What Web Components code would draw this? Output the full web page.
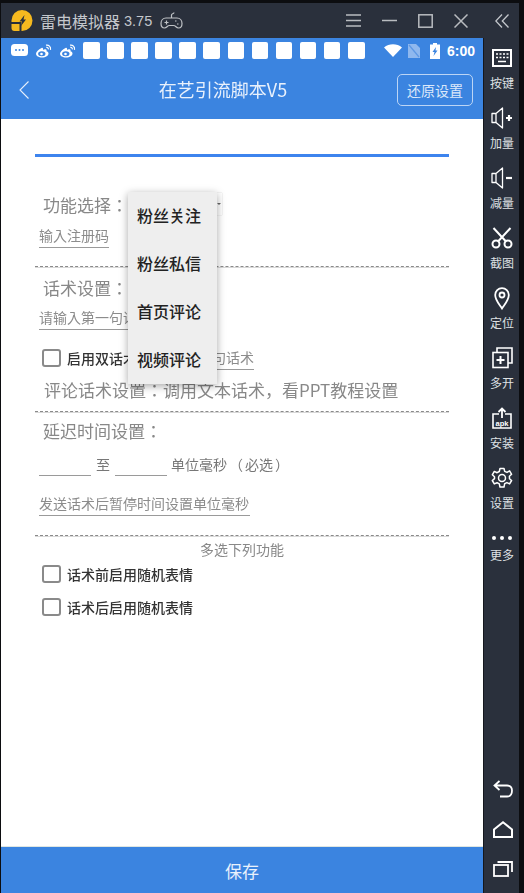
<!DOCTYPE html>
<html lang="zh">
<head>
<meta charset="utf-8">
<title>雷电模拟器</title>
<style>
  html, body { margin: 0; height: 100%; background: #0c0d10; }
  body { font-family: "Noto Sans CJK SC", "Noto Sans", sans-serif; overflow: hidden; }
</style>
</head>
<body>
<emu-window>
  <emu-titlebar slot="title"></emu-titlebar>
  <emu-sidebar slot="side">
    <side-item label="按键"><svg width="20" height="18" viewBox="0 0 20 18" fill="none" stroke="#fff" stroke-width="2"><rect x="1" y="1" width="18" height="16"/><path d="M4 5h2M7.500 5h2M11 5h2M14.500 5h2M4 8.500h2M7.500 8.500h2M11 8.500h2M14.500 8.500h2M6 12.500h8" stroke-width="1.600"/></svg></side-item>
    <side-item label="加量"><svg width="24" height="24" viewBox="0 0 24 24" fill="none" stroke="#fff" stroke-width="1.300"><path d="M2 7.500h4v9H2zM6 7.500L12.500 2v20L6 16.500" stroke-linejoin="round"/><path d="M16 12h6M19 9v6" stroke-width="2.200"/></svg></side-item>
    <side-item label="减量"><svg width="24" height="24" viewBox="0 0 24 24" fill="none" stroke="#fff" stroke-width="1.300"><path d="M2 7.500h4v9H2zM6 7.500L12.500 2v20L6 16.500" stroke-linejoin="round"/><path d="M16 12h6" stroke-width="2.200"/></svg></side-item>
    <side-item label="截图"><svg width="22" height="22" viewBox="0 0 22 22" fill="none" stroke="#fff" stroke-width="2"><circle cx="5" cy="17" r="3.500"/><circle cx="17" cy="17" r="3.500"/><path d="M7 14.500L19.500 1M15 14.500L2.500 1"/></svg></side-item>
    <side-item label="定位"><svg width="16" height="23" viewBox="0 0 16 23" fill="none" stroke="#fff" stroke-width="1.800"><path d="M8 21.500C5 17 1.200 13 1.200 8a6.800 6.800 0 0 1 13.600 0c0 5-3.800 9-6.800 13.500z"/><circle cx="8" cy="8" r="2.500"/></svg></side-item>
    <side-item label="多开"><svg width="21" height="22" viewBox="0 0 21 22" fill="none" stroke="#fff" stroke-width="1.600"><path d="M5 5V1h15v15h-4"/><rect x="1" y="5.500" width="15" height="15"/><path d="M4.500 13h8M8.500 9v8" stroke-width="2"/></svg></side-item>
    <side-item label="安装"><svg width="20" height="22" viewBox="0 0 20 22" fill="none" stroke="#fff" stroke-width="1.600"><path d="M7 7H1v14h18V7h-6"/><path d="M10 11V2M6.500 5L10 1.500 13.500 5" stroke-width="1.800"/><text x="10" y="18.500" text-anchor="middle" fill="#fff" stroke="none" font-family="Liberation Sans, sans-serif" font-size="7.500" font-weight="700">apk</text></svg></side-item>
    <side-item label="设置"><svg width="22" height="22" viewBox="0 0 22 22" fill="none" stroke="#fff" stroke-width="1.500"><path d="M9 1.500h4l.7 2.900 2.300 1 2.600-1.500 2 3.400-2.200 2 .1 2.400 2.100 1.800-2 3.400-2.700-1.300-2.200 1.100-.7 3.300H9l-.7-3.200-2.200-1.100-2.800 1.200-2-3.400 2.200-1.900V9.700L1.300 7.800l2-3.400 2.800 1.300 2.200-1.200z" stroke-linejoin="round"/><circle cx="11" cy="11" r="3.500"/></svg></side-item>
    <side-item label="更多" tight><svg width="22" height="6" viewBox="0 0 22 6" fill="#fff"><circle cx="3" cy="3" r="2"/><circle cx="11" cy="3" r="2"/><circle cx="19" cy="3" r="2"/></svg></side-item>
  </emu-sidebar>
  <phone-status slot="status"></phone-status>
  <app-bar slot="bar" heading="在艺引流脚本V5" action="还原设置"></app-bar>
  <form-panel slot="body" lang="ja">
    <blue-rule></blue-rule>

    <form-label style="margin-top:32px">功能选择：<spin-box></spin-box></form-label>
    <text-field style="margin:5px 0 0 38px;width:70px">输入注册码</text-field>
    <dash-rule style="margin-top:18px"></dash-rule>

    <form-label style="margin-top:4px">话术设置：</form-label>
    <text-field style="margin:4px 0 0 38px;width:112px">请输入第一句话术</text-field>

    <check-row style="margin-top:18px">启用双话术<text-field style="margin-left:5px;width:112px">请输入第二句话术</text-field></check-row>
    <form-label style="margin-top:6px;margin-left:43px">评论话术设置：调用文本话术，看PPT教程设置</form-label>
    <dash-rule style="margin-top:7px"></dash-rule>

    <form-label style="margin-top:2px">延迟时间设置：</form-label>
    <delay-row style="margin-top:6px"></delay-row>
    <text-field style="margin:16px 0 0 38px;width:211px">发送话术后暂停时间设置单位毫秒</text-field>
    <dash-rule style="margin-top:19px"></dash-rule>

    <multi-title style="margin-top:1px">多选下列功能</multi-title>
    <check-row style="margin-top:4px">话术前启用随机表情</check-row>
    <check-row style="margin-top:13px">话术后启用随机表情</check-row>

    <pop-menu slot="over">
      <menu-item>粉丝关注</menu-item>
      <menu-item>粉丝私信</menu-item>
      <menu-item>首页评论</menu-item>
      <menu-item>视频评论</menu-item>
    </pop-menu>
  </form-panel>
  <save-bar slot="save">保存</save-bar>
</emu-window>

<script>
// small helper, every element below just sets html in an open shadow root
class Base extends HTMLElement {
    static html = "";
    constructor() {
        super();
        this.attachShadow({ mode: "open" });
    }
    connectedCallback() {
        this.shadowRoot.innerHTML = this.constructor.html.replace(/\{\{(.+?)\}\}/g, (_, n) => this.getAttribute(n) ?? "");
    }
}

class EmuWindow extends Base {
    static html = `
      <style>
        :host { display: grid; width: 524px; height: 893px; padding-top: 3px; box-sizing: border-box;
          grid-template-columns: 1px 482px 1px 35px 5px; grid-template-rows: 35px 1fr; background: #0c0d10; }
        .title { grid-column: 2 / 5; grid-row: 1; }
        .line { grid-column: 3; grid-row: 2; background: #14171d; }
        .side { grid-column: 4; grid-row: 1 / 3; z-index: 1; }
        .phone { grid-column: 2; grid-row: 2; display: flex; flex-direction: column; background: #fff; min-height: 0; }
      </style>
      <div class="title"><slot name="title"></slot></div>
      <div class="phone">
        <slot name="status"></slot><slot name="bar"></slot><slot name="body"></slot><slot name="save"></slot>
      </div>
      <div class="line"></div>
      <div class="side"><slot name="side"></slot></div>`;
}

class EmuTitlebar extends Base {
    static html = `
      <style>
        :host { display: flex; align-items: center; height: 35px; background: #2a303c; color: #c4c7cc;
          font: 16px "Noto Sans CJK SC", sans-serif; padding-left: 10px; }
        .logo { margin-right: 7px; }
        .ver { font: 14.500px "Liberation Sans", sans-serif; margin-left: 4px; }
        .pad { margin-left: 8px; }
        .ctl { margin-left: auto; display: flex; gap: 21px; margin-right: 51px; align-items: center; }
        .ctl svg { display: block; }
      </style>
      <svg class="logo" width="22" height="21" viewBox="0 0 22 21" fill="#f6b91f"><path d="M.5 12v-1.500a10.500 10.500 0 1 1 10.500 10.500h-.5V12z"/><path d="M.5 14h8v7h-5a3 3 0 0 1-3-3z"/><path d="M13.500 5L8.500 11.500H11L10 16l5-6.500h-2.500z" fill="#2a303c"/></svg>
      <span>雷电模拟器</span><span class="ver">3.75</span>
      <svg class="pad" width="23" height="18" viewBox="0 0 23 18" fill="none" stroke="#bfc2c6" stroke-width="1.200"><path d="M6 6h11c3 0 5 2.500 5 5.500 0 3-1.500 4.500-3.500 4.500-2.500 0-2.500-2.500-5-2.500h-4c-2.500 0-2.500 2.500-5 2.500C2.500 16 1 14.500 1 11.500 1 8.500 3 6 6 6zM11.500 6V3c0-1.500 2.500-1 2.500-2.500"/><path d="M4.500 10.500h4M6.500 8.500v4M15 9h1.500M17 12h1.500"/></svg>
      <div class="ctl">
        <svg width="15" height="13" viewBox="0 0 15 13" fill="none" stroke="#b9bcc0" stroke-width="1.500"><path d="M0 1h15M0 6.500h15M0 12h15"/></svg>
        <svg width="15" height="13" viewBox="0 0 15 13" fill="none" stroke="#b9bcc0" stroke-width="1.500"><path d="M0 6.500h15"/></svg>
        <svg width="15" height="14" viewBox="0 0 15 14" fill="none" stroke="#b9bcc0" stroke-width="1.500"><rect x=".8" y=".8" width="13.400" height="12.400"/></svg>
        <svg width="14" height="14" viewBox="0 0 14 14" fill="none" stroke="#b9bcc0" stroke-width="1.500"><path d="M.5.500l13 13M13.500.500l-13 13"/></svg>
      </div>`;
}

class EmuSidebar extends Base {
    static html = `
      <style>
        :host { display: flex; flex-direction: column; align-items: stretch; height: 890px; background: #2a303c; box-sizing: border-box; }
        .fold { height: 35px; display: flex; align-items: center; justify-content: center; margin-bottom: 3px; }
        .nav { margin-top: auto; display: flex; flex-direction: column; align-items: center; gap: 23px; padding-bottom: 16px; padding-left: 2px; }
        svg { display: block; }
      </style>
      <div class="fold"><svg width="14" height="14" viewBox="0 0 14 14" fill="none" stroke="#c4c7cc" stroke-width="1.300"><path d="M7 .5L.8 7 7 13.500M13.500 .5L7.300 7l6.200 6.500"/></svg></div>
      <slot></slot>
      <div class="nav">
        <svg width="20" height="18" viewBox="0 0 20 18" fill="none" stroke="#fff" stroke-width="1.800"><path d="M6.500 1L1.500 5.500l5 4.500M1.500 5.500H14c3 0 5 1.500 5 5 0 4-2 6-5 6H7"/></svg>
        <svg width="20" height="17" viewBox="0 0 20 17" fill="none" stroke="#fff" stroke-width="2"><path d="M10 1.300L1 8.500V16h18V8.500z"/></svg>
        <svg width="20" height="16" viewBox="0 0 20 16" fill="none" stroke="#fff" stroke-width="1.800"><rect x="1" y="4" width="14" height="11"/><path d="M4.500 1H19v10"/></svg>
      </div>`;
}

class SideItem extends Base {
    static html = `
      <style>
        :host { display: flex; flex-direction: column; align-items: center; height: 60px; padding-left: 1px; color: #dfe1e4;
          font: 12px/16px "Noto Sans CJK SC", sans-serif; }
        .ico { height: 34px; display: flex; align-items: center; justify-content: center; }
        :host([tight]) .txt { margin-top: -8px; }
      </style>
      <div class="ico"><slot></slot></div>
      <div class="txt">{{label}}</div>`;
}

class PhoneStatus extends Base {
    connectedCallback() {
        const squares = Array(12).fill('<i class="sq"></i>').join("");
        const weibo = `<svg width="17" height="14" viewBox="0 0 17 14" fill="none"><path d="M6.500 4C3.500 5.300 1 7.800 1 9.800 1 12 3.800 13.500 7 13.500c3.800 0 6.500-2 6.500-4 0-1.500-1.500-2-2-2.200.3-1.300 0-2-1-2-1 0-2 .5-2.500.5.300-1.500-.2-2.500-1.500-1.800z" fill="#fff"/><ellipse cx="6.800" cy="9.800" rx="3.700" ry="2.500" fill="#3b84e0"/><circle cx="6.500" cy="10" r="1.300" fill="#fff"/><path d="M11 1.200c2.800-.6 5 1.600 4.500 4.600M11.300 3.400c1.300-.3 2.300.7 2 2" stroke="#fff" stroke-width="1.200"/></svg>`;
        this.shadowRoot.innerHTML = `
      <style>
        :host { display: flex; align-items: center; box-sizing: border-box; height: 22px; background: #3b84e0; padding: 3px 8px 0 10px; }
        svg { display: block; flex: none; }
        .sq { width: 16.500px; height: 16.500px; background: #fff; border-radius: 2px; margin-right: 7.600px; flex: none; }
        .w { margin-right: 7px; }
        .right { margin-left: auto; display: flex; align-items: center; }
        .time { font: 700 14px "Liberation Sans", sans-serif; color: #fff; margin-left: 7px; }
      </style>
      <svg class="w" width="17" height="13" viewBox="0 0 17 13"><rect x="0" y="0" width="17" height="12" rx="3.500" fill="#fff"/><circle cx="5" cy="6" r="1" fill="#3b84e0"/><circle cx="8.500" cy="6" r="1" fill="#3b84e0"/><circle cx="12" cy="6" r="1" fill="#3b84e0"/></svg>
      ${weibo.replace("<svg", '<svg class="w"')}
      ${weibo.replace("<svg", '<svg class="w"')}
      ${squares}
      <div class="right">
        <svg width="18" height="13" viewBox="0 0 18 13"><path d="M0 3.500C5 -.8 13 -.8 18 3.500L9 13z" fill="#fff"/></svg>
        <svg style="margin-left:6px" width="12" height="14" viewBox="0 0 12 14"><path d="M0 0h8l4 4v10H0z" fill="#8fb8ee"/><path d="M1 1l10 12" stroke="#5d98e4" stroke-width="1.200"/></svg>
        <svg style="margin-left:10px" width="10" height="16" viewBox="0 0 10 16"><path d="M3 0h4v1.500h3V16H0V1.500h3z" fill="#fff"/><path d="M6 4L2.500 9h2L3.500 13 7.500 7.500h-2z" fill="#3b84e0"/></svg>
        <span class="time">6:00</span>
      </div>`;
    }
}

class AppBar extends Base {
    static html = `
      <style>
        :host { display: block; position: relative; height: 59px; background: #3b84e0; color: #e9f1fc;
          font: 18px/59px "Noto Sans CJK SC", sans-serif; text-align: center; }
        .row { display: flex; align-items: center; height: 59px; padding: 0 10px 0 18px; }
        .back { display: block; }
        h1 { flex: 1; margin: 0; font: inherit; padding-left: 20px; text-align: center; filter: blur(.25px); }
        button { width: 76px; height: 32px; box-sizing: border-box; padding: 0; background: none; color: #dbe8fa;
          border: 1px solid #bcd5f5; border-radius: 5px; font: 14px "Noto Sans CJK SC", sans-serif; }
      </style>
      <div class="row">
        <svg class="back" width="10" height="18" viewBox="0 0 10 18" fill="none" stroke="#e6effb" stroke-width="1.100"><path d="M9.500 .5L1 9l8.500 8.500"/></svg>
        <h1>{{heading}}</h1>
        <button>{{action}}</button>
      </div>`;
}

class FormPanel extends Base {
    static html = `
      <style>
        :host { display: block; position: relative; flex: 1; min-height: 0; background: #fff; padding-top: 35px; box-sizing: border-box;
          border-bottom: 1px solid #dfe6e2; font-family: "Noto Sans CJK JP", sans-serif; }
        .flow { display: flex; flex-direction: column; align-items: flex-start; filter: blur(.3px); }
      </style>
      <div class="flow"><slot></slot></div>
      <slot name="over"></slot>`;
}

class BlueRule extends Base {
    static html = `<style>:host { display: block; width: 414px; height: 3px; margin-left: 34px; background: #3d84ee; }</style>`;
}

class DashRule extends Base {
    static html = `<style>:host { display: block; width: 414px; margin-left: 34px; border-top: 1px dashed #8a8a8a; height: 1px; background: #d8d8d8; background-clip: padding-box; }</style>`;
}

class FormLabel extends Base {
    static html = `
      <style>
        :host { display: flex; align-items: center; height: 30px; margin-left: 42px; color: #888; font-size: 17px; white-space: nowrap; }
      </style>
      <slot></slot>`;
}

class SpinBox extends Base {
    static html = `
      <style>
        :host { display: block; position: relative; width: 93px; height: 22px; margin-left: 1px; box-shadow: 0 0 1px #bbb; }
        i { position: absolute; right: 1px; top: 10px; border: 2.500px solid transparent; border-top-color: #666; border-bottom: 0; }
      </style>
      <i></i>`;
}

class TextField extends Base {
    static html = `
      <style>
        :host { display: block; box-sizing: border-box; height: 24px; line-height: 23px; font-size: 14px; color: #8c8c8c;
          border-bottom: 1px solid #9a9a9a; white-space: nowrap; overflow: hidden; flex: none; font-weight: 400; }
      </style>
      <slot></slot>`;
}

class CheckRow extends Base {
    static html = `
      <style>
        :host { display: flex; align-items: center; height: 20px; margin-left: 41px; color: #333; font-size: 14px; font-weight: 500; white-space: nowrap; }
        .box { width: 15px; height: 14px; border: 2px solid #8a8a8a; border-radius: 3px; margin-right: 6px; flex: none; }
      </style>
      <div class="box"></div><slot></slot>`;
}

class DelayRow extends Base {
    static html = `
      <style>
        :host { display: flex; align-items: flex-end; height: 25px; margin-left: 38px; color: #777; font-size: 14px; white-space: nowrap; }
        .blank { width: 52px; height: 1px; background: #9a9a9a; }
        .to { width: 24px; text-align: center; line-height: 24px; }
        .unit { margin-left: 4px; line-height: 24px; }
        .unit b { font-weight: 400; margin: 0 2px; }
      </style>
      <div class="blank"></div><span class="to">至</span><div class="blank"></div><span class="unit">单位毫秒<b>（</b>必选<b>）</b></span>`;
}

class MultiTitle extends Base {
    static html = `
      <style>:host { display: block; margin-left: 199px; color: #888; font-size: 14px; line-height: 22px; }</style>
      <slot></slot>`;
}

class PopMenu extends Base {
    static html = `
      <style>
        :host { display: block; position: absolute; left: 127px; top: 73px; width: 89px; background: #eeeeee;
          box-shadow: 0 2px 8px rgba(0, 0, 0, .35); }
      </style>
      <slot></slot>`;
}

class MenuItem extends Base {
    static html = `
      <style>
        :host { display: block; height: 48px; padding-left: 9px; color: #222; font-size: 16px; font-weight: 500; line-height: 47px; white-space: nowrap; }
      </style>
      <slot></slot>`;
}

class SaveBar extends Base {
    static html = `
      <style>
        :host { display: block; height: 46px; background: #3b84e0; color: #e9f1fc; font-size: 17px; line-height: 48px; text-align: center; }
      </style>
      <slot></slot>`;
}

const tags = {
    "emu-window": EmuWindow, "emu-titlebar": EmuTitlebar, "emu-sidebar": EmuSidebar, "side-item": SideItem,
    "phone-status": PhoneStatus, "app-bar": AppBar, "form-panel": FormPanel, "blue-rule": BlueRule,
    "dash-rule": DashRule, "form-label": FormLabel, "spin-box": SpinBox, "text-field": TextField,
    "check-row": CheckRow, "delay-row": DelayRow, "multi-title": MultiTitle, "pop-menu": PopMenu,
    "menu-item": MenuItem, "save-bar": SaveBar,
};
for (const [name, cls] of Object.entries(tags)) customElements.define(name, cls);
</script>
</body>
</html>
